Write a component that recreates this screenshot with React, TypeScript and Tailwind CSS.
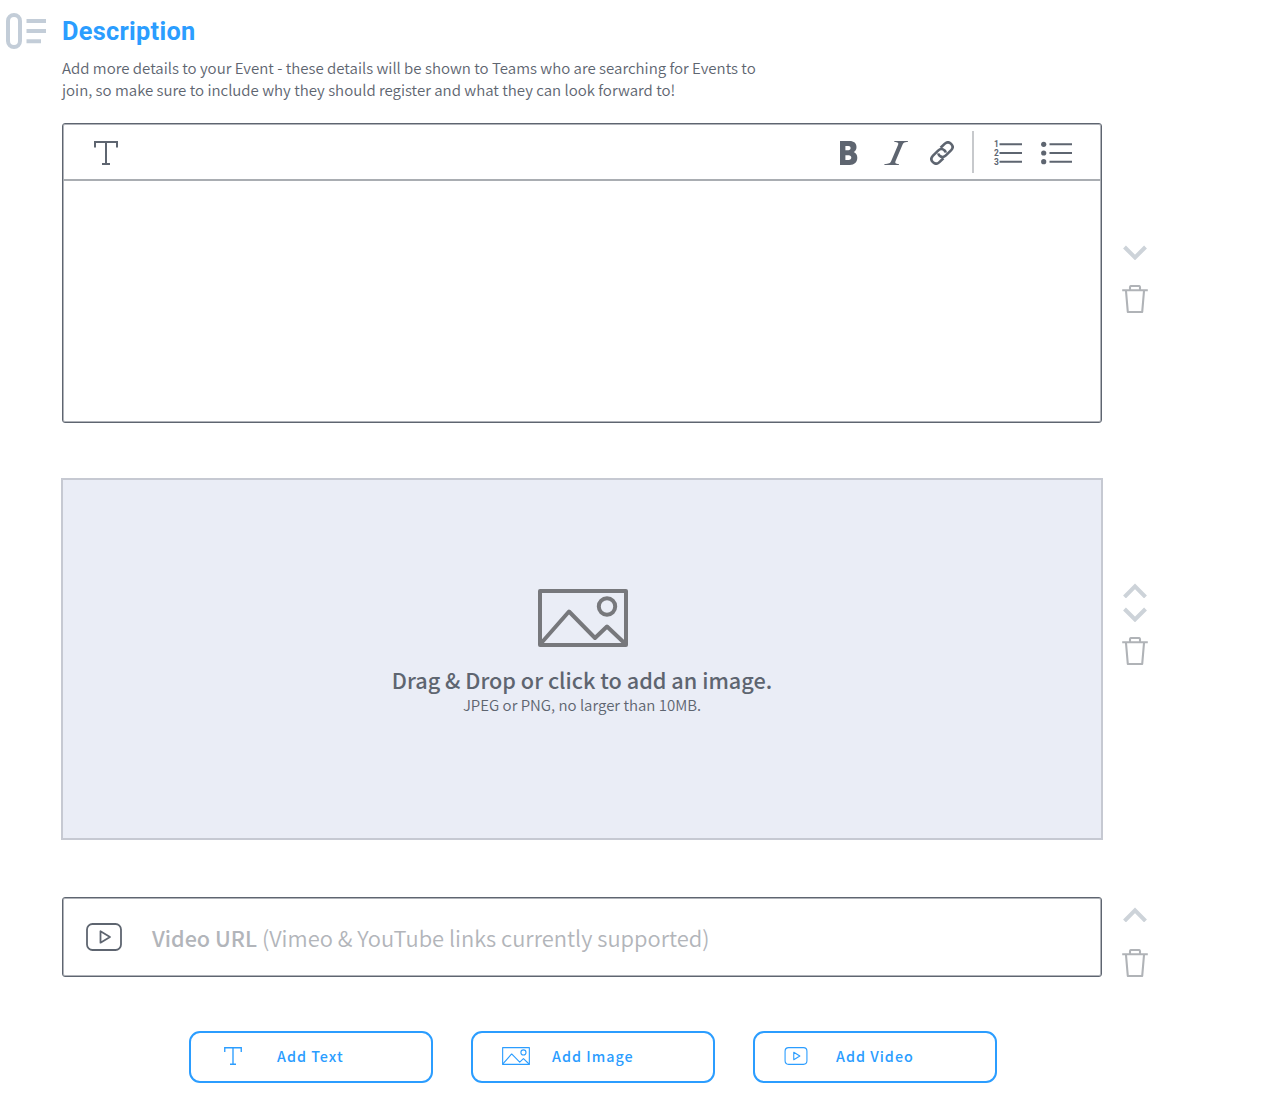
import React from "react";

type IconProps = { className?: string; stroke?: number };

function TextIcon({ className, stroke = 2 }: IconProps) {
  return (
    <svg viewBox="0 0 24 24" className={className} fill="none" stroke="currentColor" strokeWidth={stroke}>
      <path d="M1 6.5V1H23V6.5M12 1V23M8 23H16" />
    </svg>
  );
}

function ImageIcon({ className, stroke = 4 }: IconProps) {
  return (
    <svg viewBox="0 0 90 58" className={className} fill="none" stroke="currentColor" strokeWidth={stroke} strokeLinejoin="round">
      <rect x="2" y="2" width="86" height="54" />
      <path d="M2 55.5L31 22.5L57 49L69 37.5L88 55.5" />
      <circle cx="69" cy="17.5" r="8.2" />
    </svg>
  );
}

function VideoIcon({ className, stroke = 1.8 }: IconProps) {
  return (
    <svg viewBox="0 0 36 28" className={className} fill="none" stroke="currentColor" strokeWidth={stroke} strokeLinejoin="round">
      <rect x="1" y="1" width="34" height="26" rx="5.5" />
      <path d="M14.5 8.3V19.7L24 14Z" />
    </svg>
  );
}

function Chevron({ up = false }: { up?: boolean }) {
  return (
    <svg viewBox="0 0 24 15" className="h-[15px] w-6 text-[#cdd3d9]" fill="none" stroke="currentColor" strokeWidth="4">
      <path d={up ? "M1.5 14L12 3.4L22.5 14" : "M1.5 2L12 12.5L22.5 2"} />
    </svg>
  );
}

function Trash() {
  return (
    <svg viewBox="0 0 26 28" className="h-7 w-[26px] text-[#b0b3b7]" fill="none" stroke="currentColor" strokeWidth="2.1" strokeLinejoin="round">
      <path d="M0.2 5.2H25.8M8 5V2.2Q8 1 9.2 1H16.8Q18 1 18 2.2V5M4 6L5.8 27H20.2L22 6" />
    </svg>
  );
}

function Heading() {
  return (
    <header className="flex h-[123px] pl-[6px] pt-[13px]">
      <svg viewBox="0 0 40 36" className="h-9 w-10 shrink-0 text-[#c3cdd8]" fill="none" stroke="currentColor" strokeWidth="4">
        <rect x="2" y="2" width="12" height="32" rx="6" />
        <path d="M20.5 8H40M20.5 18H40M20.5 28.3H35" />
      </svg>
      <div className="ml-4">
        <h1 className="h-[44px] whitespace-nowrap pt-px font-[Roboto,sans-serif] text-[25.3px] font-bold leading-9 tracking-[0.3px] text-[#2b9dff]">Description</h1>
        <p className="whitespace-nowrap text-[15.03px] font-[350] leading-[22px]">
          Add more details to your Event - these details will be shown to Teams who are searching for Events to
          <br />
          join, so make sure to include why they should register and what they can look forward to!
        </p>
      </div>
    </header>
  );
}

function Toolbar() {
  return (
    <div className="flex h-[57px] items-start border-b-2 border-[#a9adb2] pl-[31px] pr-[29px]">
      <TextIcon className="mt-[17px] h-6 w-6" />
      <svg viewBox="0 0 18 24" className="ml-auto mt-[17px] h-6 w-[18px]" fill="currentColor" fillRule="evenodd">
        <path d="M0 0H9.5C14 0 16.5 2.3 16.5 6C16.5 8.4 15.5 10.1 13.7 11C16 12 17.3 14 17.3 16.8C17.3 21.3 14.3 24 9.8 24H0ZM5.4 5V9.2H8.4C9.8 9.2 10.6 8.4 10.6 7.1C10.6 5.8 9.8 5 8.4 5ZM5.4 14.2V19H8.7C10.3 19 11.3 18.1 11.3 16.6C11.3 15.1 10.3 14.2 8.7 14.2Z" />
      </svg>
      <svg viewBox="0 0 24 24" className="ml-[26px] mt-[17px] h-6 w-6" fill="currentColor">
        <path d="M10.5 0H24L23.7 1C20.4 1.1 19.4 1.6 18.4 4L11.6 20C10.8 22 11.4 22.9 15 23L14.7 24H0.3L0.6 23C4.8 22.9 6.2 22.2 7.2 20L14 4C14.9 1.7 13.9 1.1 10.2 1Z" />
      </svg>
      <svg viewBox="0 0 24 24" className="ml-[22px] mt-[17px] h-6 w-6" fill="none" stroke="currentColor" strokeWidth="2.6">
        <path d="M10.6 6.8L14.6 2.9C16.6 1 19.2 0.9 21.1 2.8C23 4.7 23 7.3 21.2 9.2L15.9 14.4C13.9 16.3 11.3 16.3 9.4 14.5C8.7 13.8 8.4 13.1 8.3 12.4" />
        <path d="M13.4 17.2L9.4 21.1C7.4 23 4.8 23.1 2.9 21.2C1 19.3 1 16.7 2.8 14.8L8.1 9.6C10.1 7.7 12.7 7.7 14.6 9.5C15.3 10.2 15.6 10.9 15.7 11.6" />
      </svg>
      <div className="ml-[18px] mt-[7px] h-[42px] w-[2px] bg-[#c7c9cc]" />
      <svg viewBox="0 0 28 25" className="ml-5 mt-[17px] h-[25px] w-7 overflow-visible">
        <path d="M5.5 3.3H28M5.5 12H28M5.5 20.7H28" stroke="currentColor" strokeWidth="2" />
        <g fill="currentColor" fontFamily="Roboto, sans-serif" fontSize="8.4" fontWeight="700">
          <text x="0" y="6.3">1</text>
          <text x="0" y="15">2</text>
          <text x="0" y="24">3</text>
        </g>
      </svg>
      <svg viewBox="0 0 31 24" className="ml-[19px] mt-[17px] h-6 w-[31px]" stroke="currentColor" strokeWidth="2" fill="currentColor">
        <path d="M8.5 3.3H31M8.5 12H31M8.5 20.7H31" />
        <g stroke="none">
          <circle cx="2.7" cy="3.3" r="2.6" />
          <circle cx="2.7" cy="12" r="2.6" />
          <circle cx="2.7" cy="20.7" r="2.6" />
        </g>
      </svg>
    </div>
  );
}

function AddButton({ icon, label, className }: { icon: React.ReactNode; label: string; className: string }) {
  return (
    <button className={`flex h-[52px] w-[244px] items-center rounded-[11px] border-2 border-[#2b9dff] pb-[2px] text-[14.35px] font-medium leading-5 tracking-[1px] text-[#2b9dff] ${className}`}>
      {icon}
      <span className="whitespace-nowrap">{label}</span>
    </button>
  );
}

export default function App() {
  return (
    <main className="h-[1107px] w-[1266px] overflow-hidden bg-white font-['Noto_Sans_CJK_SC',sans-serif] text-[#5e6570]">
      <Heading />
      <section className="ml-[62px] flex">
        <div className="h-[300px] w-[1040px] rounded-[3px] border border-[#5e6570] shadow-[inset_0_0_0_1px_#b0b3b9]">
          <Toolbar />
        </div>
        <div className="ml-5 flex w-[26px] flex-col items-center pt-[122px]">
          <Chevron />
          <div className="mt-[25px]"><Trash /></div>
        </div>
      </section>

      <section className="ml-[61px] mt-[55px] flex">
        <div className="flex h-[362px] w-[1042px] flex-col items-center border-2 border-[#c6c9d2] bg-[#eaedf6]">
          <ImageIcon className="ml-[2px] mt-[109px] h-[58px] w-[90px] text-[#77787c]" />
          <h2 className="mt-[17px] whitespace-nowrap text-[21.67px] font-medium leading-8">Drag &amp; Drop or click to add an image.</h2>
          <p className="whitespace-nowrap text-[15px] font-[350] leading-[18px]">JPEG or PNG, no larger than 10MB.</p>
        </div>
        <div className="ml-[19px] flex w-[26px] flex-col items-center pt-[105px]">
          <Chevron up />
          <div className="mt-[9px]"><Chevron /></div>
          <div className="mt-[15px]"><Trash /></div>
        </div>
      </section>

      <section className="ml-[62px] mt-[57px] flex">
        <div className="flex h-20 w-[1040px] items-center rounded-[3px] border border-[#5e6570] pl-[23px] shadow-[inset_0_0_0_1px_#b0b3b9]">
          <VideoIcon className="h-7 w-9" />
          <p className="ml-[30px] mt-[2px] whitespace-nowrap text-[21.9px] font-[350] leading-8 text-[#b2b5ba]">
            <span className="text-[21.6px] font-medium">Video URL</span> (Vimeo &amp; YouTube links currently supported)
          </p>
        </div>
        <div className="ml-5 flex w-[26px] flex-col items-center pt-[10px]">
          <Chevron up />
          <div className="mt-[27px]"><Trash /></div>
        </div>
      </section>

      <section className="ml-[189px] mt-[54px] flex gap-[38px]">
        <AddButton label="Add Text" className="gap-[35px] pl-[33px]" icon={<TextIcon className="h-[18px] w-[18px]" stroke={1.8} />} />
        <AddButton label="Add Image" className="gap-[22px] pl-[29px]" icon={<ImageIcon className="h-[18px] w-7" stroke={3.6} />} />
        <AddButton label="Add Video" className="gap-[28px] pl-[29px]" icon={<VideoIcon className="h-[18px] w-6" stroke={1.7} />} />
      </section>
    </main>
  );
}
